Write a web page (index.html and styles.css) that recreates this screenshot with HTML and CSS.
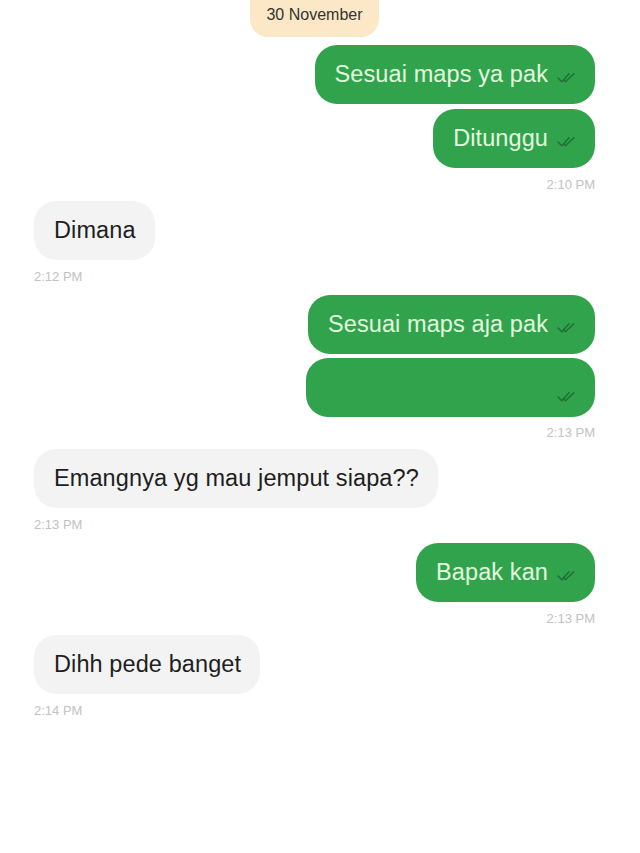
FILE: index.html
```html
<!DOCTYPE html>
<html lang="id">
<head>
  <meta charset="UTF-8" />
  <meta name="viewport" content="width=device-width, initial-scale=1.0" />
  <title>Chat</title>
  <link rel="stylesheet" href="styles.css">
</head>
<body>

  <div class="chat">
    <div class="date">30 November</div>

    <div class="group sent">
      <div class="bubble">Sesuai maps ya pak <svg class="tick" viewBox="0 0 20 12"><path d="M1 6.5l3.5 3.5L11.5 2.5"/><path d="M6.5 8.5l1.5 1.5 8-7.5"/></svg></div>
      <div class="bubble">Ditunggu <svg class="tick" viewBox="0 0 20 12"><path d="M1 6.5l3.5 3.5L11.5 2.5"/><path d="M6.5 8.5l1.5 1.5 8-7.5"/></svg></div>
      <div class="time">2:10 PM</div>
    </div>

    <div class="group received">
      <div class="bubble">Dimana</div>
      <div class="time">2:12 PM</div>
    </div>

    <div class="group sent tight">
      <div class="bubble">Sesuai maps aja pak <svg class="tick" viewBox="0 0 20 12"><path d="M1 6.5l3.5 3.5L11.5 2.5"/><path d="M6.5 8.5l1.5 1.5 8-7.5"/></svg></div>
      <div class="bubble blank"><svg class="tick" viewBox="0 0 20 12"><path d="M1 6.5l3.5 3.5L11.5 2.5"/><path d="M6.5 8.5l1.5 1.5 8-7.5"/></svg></div>
      <div class="time">2:13 PM</div>
    </div>

    <div class="group received">
      <div class="bubble">Emangnya yg mau jemput siapa??</div>
      <div class="time">2:13 PM</div>
    </div>

    <div class="group sent">
      <div class="bubble">Bapak kan <svg class="tick" viewBox="0 0 20 12"><path d="M1 6.5l3.5 3.5L11.5 2.5"/><path d="M6.5 8.5l1.5 1.5 8-7.5"/></svg></div>
      <div class="time">2:13 PM</div>
    </div>

    <div class="group received">
      <div class="bubble">Dihh pede banget</div>
      <div class="time">2:14 PM</div>
    </div>
  </div>

</body>
</html>
```

FILE: styles.css
```css
* {
  box-sizing: border-box;
}

body {
  margin: 0;
  padding: 0;
  font-family: 'Liberation Sans', Arial, sans-serif;
  background: #fff;
  color: #1e1e1e;
}

.chat {
  display: flex;
  flex-direction: column;
  padding: 0 45px 0 34px;
}

.date {
  align-self: center;
  padding: 5px 16px 12px;
  font-size: 16px;
  line-height: 20px;
  color: #333;
  background: #fce8c7;
  border-radius: 0 0 18px 18px;
  margin-bottom: 8px;
}

.group {
  display: flex;
  flex-direction: column;
  gap: 5px;
  margin-top: 10px;
}

.date + .group {
  margin-top: 0;
}

.group.tight {
  gap: 4px;
}

.sent {
  align-items: flex-end;
}

.received {
  align-items: flex-start;
  margin-top: 8px;
}

.bubble {
  display: flex;
  align-items: center;
  gap: 9px;
  padding: 15px 17px 15px 20px;
  font-size: 23.5px;
  line-height: 29px;
  letter-spacing: 0.1px;
  border-radius: 22px;
}

.sent .bubble {
  background: #31a34d;
  color: #e2fbdf;
}

.received .bubble {
  background: #f3f3f3;
  color: #1e1e1e;
  padding-right: 19px;
}

.bubble.blank {
  width: 289px;
  height: 59px;
  justify-content: flex-end;
  padding-top: 27px;
  padding-bottom: 15px;
}

.tick {
  width: 21px;
  height: 13px;
  margin-top: 5px;
  fill: none;
  stroke: #1f6e34;
  stroke-width: 1.4;
  stroke-linecap: round;
  stroke-linejoin: round;
}

.time {
  margin-top: 4px;
  font-size: 13px;
  line-height: 16px;
  color: #c2c2c2;
}
```
